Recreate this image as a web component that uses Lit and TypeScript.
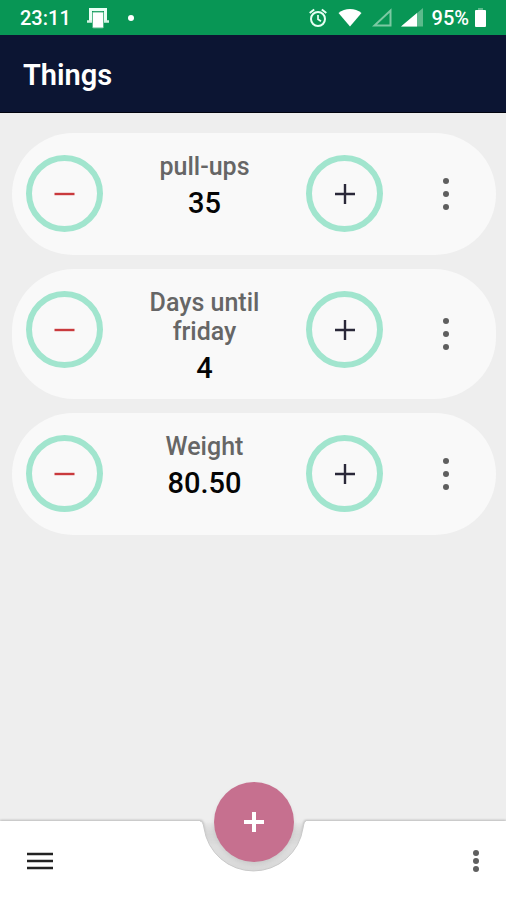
import { LitElement, html, css } from "lit";
import { customElement, property, state } from "lit/decorators.js";

interface Thing {
  name: string;
  value: number;
  digits: number;
}

const dots = (height: number, gap: number) => html`
  <svg width="8" height=${height} viewBox="0 0 8 ${height}" fill="#5f5f5f" aria-hidden="true">
    <circle cx="4" cy=${height / 2 - gap} r="3" />
    <circle cx="4" cy=${height / 2} r="3" />
    <circle cx="4" cy=${height / 2 + gap} r="3" />
  </svg>
`;

@customElement("status-bar")
class StatusBar extends LitElement {
  static styles = css`
    :host {
      display: flex;
      align-items: center;
      height: 35px;
      box-sizing: border-box;
      padding: 0 20px;
      background: #089655;
      color: #fff;
      font-size: 20px;
      font-weight: 500;
      line-height: 36px;
    }
    svg {
      display: block;
      flex: none;
    }
    .group {
      display: flex;
      align-items: center;
    }
    .left {
      gap: 16px;
    }
    .right {
      gap: 9px;
      margin-left: auto;
    }
    .charge {
      display: flex;
      align-items: center;
      gap: 6px;
    }
  `;

  render() {
    return html`
      <div class="group left">
        <span>23:11</span>
        <svg width="22" height="22" viewBox="0 0 22 22" fill="none" aria-hidden="true">
          <path d="M3.500 14V2.500H18.500V14" stroke="#e9fff4" stroke-width="3" />
          <path d="M0 14.500H22" stroke="#d5f2e3" stroke-width="2.500" />
          <rect x="5.500" y="5" width="11" height="16" rx="1" fill="#fff" stroke="#58b98b" />
        </svg>
        <svg width="12" height="6" viewBox="0 0 12 6" fill="#fff" aria-hidden="true">
          <circle cx="6" cy="3" r="3" />
        </svg>
      </div>
      <div class="group right">
        <svg width="20" height="20" viewBox="0 0 20 20" fill="none" stroke="#e6fff3" stroke-width="2" aria-hidden="true">
          <circle cx="9" cy="11" r="7" />
          <path d="M0.700 5L5.200 1.500M17.300 5L12.800 1.500" />
          <path d="M9 7V11.300L12 13.300" stroke-width="1.700" />
        </svg>
        <svg width="25" height="18" viewBox="0 0 25 18" fill="#fff" aria-hidden="true">
          <path d="M12 17.500L0.500 4Q5.500 0 12 0T23.500 4Z" />
        </svg>
        <svg width="20" height="19" viewBox="0 0 20 19" fill="none" stroke="#7cc9a3" stroke-width="2" aria-hidden="true">
          <path d="M2.500 17.500H18.500V2.500Z" />
        </svg>
        <svg width="22" height="19" viewBox="0 0 22 19" aria-hidden="true">
          <path d="M0 18.500H22V0Z" fill="#5cba8c" />
          <path d="M0 18.500H16V5Z" fill="#fff" />
        </svg>
        <div class="charge">
          <span>95%</span>
          <svg width="11" height="20" viewBox="0 0 11 20" aria-hidden="true">
            <path d="M3 0H8V2H3Z" fill="#5cba8c" />
            <rect y="2" width="11" height="17" rx="1" fill="#fff" />
          </svg>
        </div>
      </div>
    `;
  }
}

@customElement("thing-card")
class ThingCard extends LitElement {
  @property() name = "";
  @property() value = "";

  static styles = css`
    :host {
      display: grid;
      grid-template-columns: 77px minmax(0, 1fr) 77px 113px;
      min-height: 122px;
      box-sizing: border-box;
      padding-left: 14px;
      border-radius: 62px;
      background: #f9f9f9;
    }
    button {
      display: flex;
      align-items: center;
      justify-content: center;
      padding: 0;
      border: 0;
      background: none;
      cursor: pointer;
    }
    .step {
      width: 77px;
      height: 77px;
      margin-top: 22px;
      box-sizing: border-box;
      border: 6px solid #a1e5ce;
      border-radius: 50%;
    }
    .step svg {
      fill: none;
    }
    .minus {
      stroke: #c93a3d;
    }
    .plus {
      stroke: #2a2839;
    }
    .text {
      padding: 19px 36px 9px;
      text-align: center;
    }
    .name {
      margin: 0;
      color: #666;
      font-size: 25px;
      font-weight: 500;
      line-height: 29px;
    }
    .value {
      display: block;
      color: #050505;
      font-size: 29px;
      font-weight: 500;
      line-height: 44px;
    }
    .more {
      width: 48px;
      height: 48px;
      margin-left: 39px;
      align-self: center;
    }
  `;

  private step(by: number) {
    this.dispatchEvent(new CustomEvent("step", { detail: by }));
  }

  render() {
    return html`
      <button class="step" aria-label="Decrease ${this.name}" @click=${() => this.step(-1)}>
        <svg class="minus" width="21" height="21" viewBox="0 0 21 21" stroke-width="2.400"><path d="M0.500 11H20.500" /></svg>
      </button>
      <div class="text">
        <h2 class="name">${this.name}</h2>
        <output class="value">${this.value}</output>
      </div>
      <button class="step" aria-label="Increase ${this.name}" @click=${() => this.step(1)}>
        <svg class="plus" width="21" height="21" viewBox="0 0 21 21" stroke-width="2.400"><path d="M1 11H21M11 1V21" /></svg>
      </button>
      <button class="more" aria-label="Options for ${this.name}">${dots(36, 13)}</button>
    `;
  }
}

@customElement("bottom-bar")
class BottomBar extends LitElement {
  static styles = css`
    :host {
      display: flex;
      position: relative;
      align-items: center;
      justify-content: space-between;
      height: 79px;
      box-sizing: border-box;
      padding: 0 6px 0 16px;
    }
    .surface {
      display: flex;
      position: absolute;
      inset: 0;
      filter: drop-shadow(0 -1px 1px rgba(0, 0, 0, 0.22));
    }
    .side {
      flex: 1;
      background: #fff;
    }
    .notch {
      display: block;
      flex: none;
    }
    button {
      display: flex;
      position: relative;
      align-items: center;
      justify-content: center;
      width: 48px;
      height: 48px;
      padding: 0;
      border: 0;
      background: none;
      cursor: pointer;
    }
    .add {
      position: absolute;
      top: -39px;
      left: 50%;
      width: 80px;
      height: 80px;
      margin-left: -39px;
      border-radius: 50%;
      background: #c6708f;
      box-shadow: 0 2px 4px rgba(0, 0, 0, 0.08);
    }
  `;

  render() {
    return html`
      <div class="surface">
        <div class="side"></div>
        <svg class="notch" width="106" height="79" viewBox="0 0 106 79" aria-hidden="true">
          <defs>
            <linearGradient id="shade" gradientUnits="userSpaceOnUse" x1="0" y1="0" x2="0" y2="50">
              <stop offset="0" stop-color="#dedede" stop-opacity="0" />
              <stop offset="0.500" stop-color="#dedede" />
              <stop offset="1" stop-color="#d8d8d8" />
            </linearGradient>
          </defs>
          <path d="M0 0H106V55H0Z" fill="url(#shade)" />
          <path d="M0 0Q3 0 4 7A50 50 0 0 0 103 7Q104 0 106 0V79H0Z" fill="#fff" />
          <path d="M0 0Q3 0 4 7A50 50 0 0 0 103 7Q104 0 106 0" fill="none" stroke="#c9c9c9" />
        </svg>
        <div class="side"></div>
      </div>
      <button aria-label="Menu">
        <svg width="26" height="20" viewBox="0 0 26 20" stroke="#222" stroke-width="2.400">
          <path d="M0 3H26M0 10H26M0 17H26" />
        </svg>
      </button>
      <button aria-label="More options">${dots(24, 8)}</button>
      <button class="add" aria-label="Add thing">
        <svg width="20" height="20" viewBox="0 0 20 20" stroke="#fff" stroke-width="4">
          <path d="M0 10H20M10 0V20" />
        </svg>
      </button>
    `;
  }
}

@customElement("app-root")
class AppRoot extends LitElement {
  @state() private things: Thing[] = [
    { name: "pull-ups", value: 35, digits: 0 },
    { name: "Days until friday", value: 4, digits: 0 },
    { name: "Weight", value: 80.5, digits: 2 },
  ];

  static styles = css`
    :host {
      display: flex;
      flex-direction: column;
      min-height: 100vh;
      background: #eee;
      font-family: Roboto, "Liberation Sans", sans-serif;
    }
    .header {
      display: flex;
      align-items: center;
      height: 78px;
      box-sizing: border-box;
      padding: 3px 23px 0;
      border-bottom: 1px solid #02040f;
      background: #0c1533;
    }
    .title {
      margin: 0;
      color: #fff;
      font-size: 29px;
      font-weight: 600;
      line-height: 36px;
    }
    .list {
      display: flex;
      flex: 1;
      flex-direction: column;
      gap: 14px;
      padding: 20px 10px 60px 12px;
    }
  `;

  private change(index: number, by: number) {
    this.things = this.things.map((t, i) => (i === index ? { ...t, value: t.value + by } : t));
  }

  render() {
    return html`
      <status-bar></status-bar>
      <header class="header"><h1 class="title">Things</h1></header>
      <main class="list">
        ${this.things.map(
          (t, i) => html`
            <thing-card
              .name=${t.name}
              .value=${t.value.toFixed(t.digits)}
              @step=${(e: CustomEvent<number>) => this.change(i, e.detail)}
            ></thing-card>
          `
        )}
      </main>
      <bottom-bar></bottom-bar>
    `;
  }
}
